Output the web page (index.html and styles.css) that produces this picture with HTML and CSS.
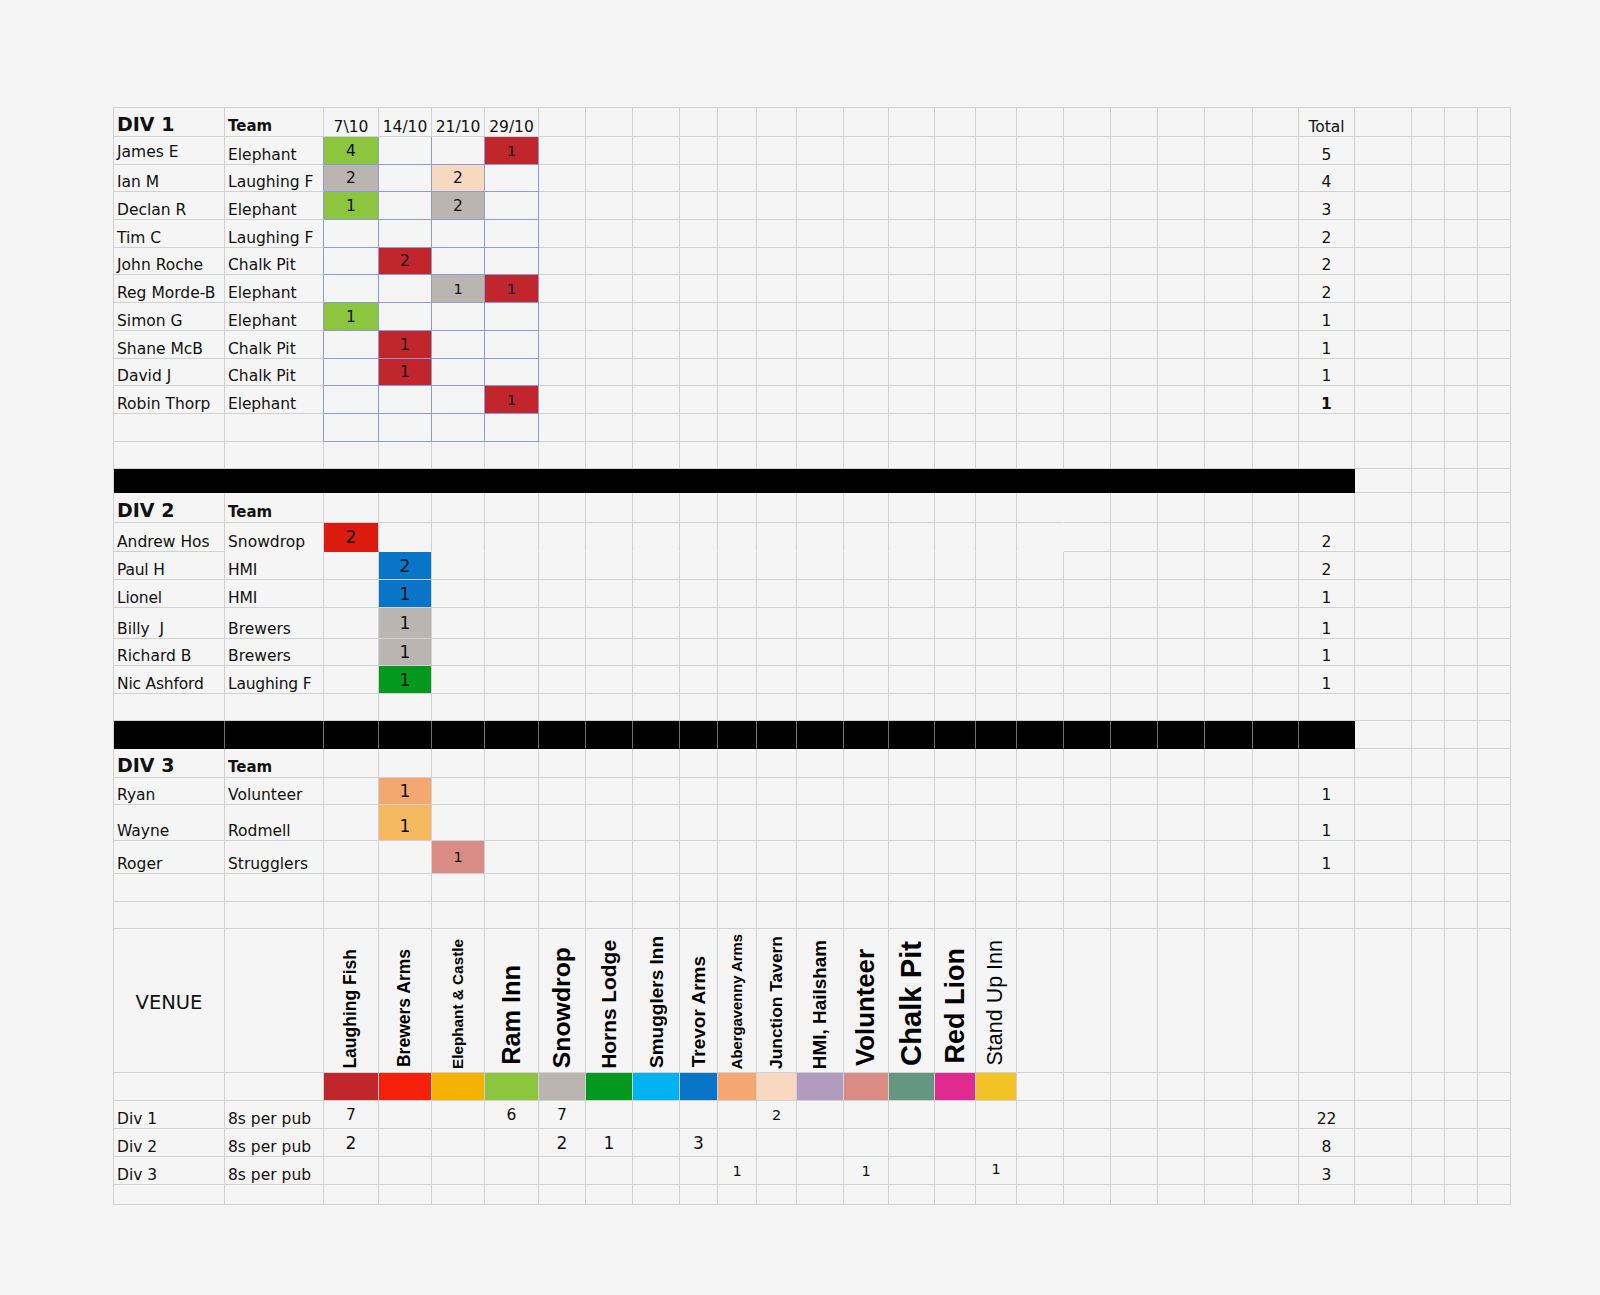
FILE: index.html
```html
<!DOCTYPE html>
<html lang="en">
<head>
<meta charset="utf-8">
<title>Darts league</title>
<link rel="stylesheet" href="styles.css">
</head>
<body>
<div class="sheet">
  <!-- DIV 1 header -->
  <div class="row">
    <div class="h1">DIV 1</div><div class="h2">Team</div>
    <div class="ctr">7\10</div><div class="ctr">14/10</div><div class="ctr">21/10</div><div class="ctr">29/10</div>
    <div></div><div></div><div></div><div></div><div></div><div></div><div></div><div></div><div></div><div></div><div></div><div></div><div></div><div></div><div></div><div></div><div></div>
    <div class="ctr">Total</div>
    <div></div><div></div><div></div><div></div>
  </div>
  <div class="row">
    <div class="nm hi">James E</div><div class="bl">Elephant</div>
    <div class="b n lgreen">4</div><div class="b"></div><div class="b"></div><div class="b n dred sm">1</div>
    <div></div><div></div><div></div><div></div><div></div><div></div><div></div><div></div><div></div><div></div><div></div><div></div><div></div><div></div><div></div><div></div><div></div>
    <div class="ctr">5</div>
    <div></div><div></div><div></div><div></div>
  </div>
  <div class="row">
    <div class="nm">Ian M</div><div class="bl">Laughing F</div>
    <div class="b n grey">2</div><div class="b"></div><div class="b n peach">2</div><div class="b"></div>
    <div></div><div></div><div></div><div></div><div></div><div></div><div></div><div></div><div></div><div></div><div></div><div></div><div></div><div></div><div></div><div></div><div></div>
    <div class="ctr">4</div>
    <div></div><div></div><div></div><div></div>
  </div>
  <div class="row">
    <div class="nm">Declan R</div><div class="bl">Elephant</div>
    <div class="b n lgreen">1</div><div class="b"></div><div class="b n grey">2</div><div class="b"></div>
    <div></div><div></div><div></div><div></div><div></div><div></div><div></div><div></div><div></div><div></div><div></div><div></div><div></div><div></div><div></div><div></div><div></div>
    <div class="ctr">3</div>
    <div></div><div></div><div></div><div></div>
  </div>
  <div class="row">
    <div class="nm">Tim C</div><div class="bl">Laughing F</div>
    <div class="b"></div><div class="b"></div><div class="b"></div><div class="b"></div>
    <div></div><div></div><div></div><div></div><div></div><div></div><div></div><div></div><div></div><div></div><div></div><div></div><div></div><div></div><div></div><div></div><div></div>
    <div class="ctr">2</div>
    <div></div><div></div><div></div><div></div>
  </div>
  <div class="row">
    <div class="nm">John Roche</div><div class="bl">Chalk Pit</div>
    <div class="b"></div><div class="b n dred">2</div><div class="b"></div><div class="b"></div>
    <div></div><div></div><div></div><div></div><div></div><div></div><div></div><div></div><div></div><div></div><div></div><div></div><div></div><div></div><div></div><div></div><div></div>
    <div class="ctr">2</div>
    <div></div><div></div><div></div><div></div>
  </div>
  <div class="row">
    <div class="nm">Reg Morde-B</div><div class="bl">Elephant</div>
    <div class="b"></div><div class="b"></div><div class="b n grey sm">1</div><div class="b n dred sm">1</div>
    <div></div><div></div><div></div><div></div><div></div><div></div><div></div><div></div><div></div><div></div><div></div><div></div><div></div><div></div><div></div><div></div><div></div>
    <div class="ctr">2</div>
    <div></div><div></div><div></div><div></div>
  </div>
  <div class="row">
    <div class="nm">Simon G</div><div class="bl">Elephant</div>
    <div class="b n lgreen">1</div><div class="b"></div><div class="b"></div><div class="b"></div>
    <div></div><div></div><div></div><div></div><div></div><div></div><div></div><div></div><div></div><div></div><div></div><div></div><div></div><div></div><div></div><div></div><div></div>
    <div class="ctr">1</div>
    <div></div><div></div><div></div><div></div>
  </div>
  <div class="row">
    <div class="nm">Shane McB</div><div class="bl">Chalk Pit</div>
    <div class="b"></div><div class="b n dred">1</div><div class="b"></div><div class="b"></div>
    <div></div><div></div><div></div><div></div><div></div><div></div><div></div><div></div><div></div><div></div><div></div><div></div><div></div><div></div><div></div><div></div><div></div>
    <div class="ctr">1</div>
    <div></div><div></div><div></div><div></div>
  </div>
  <div class="row">
    <div class="nm">David J</div><div class="bl">Chalk Pit</div>
    <div class="b"></div><div class="b n dred">1</div><div class="b"></div><div class="b"></div>
    <div></div><div></div><div></div><div></div><div></div><div></div><div></div><div></div><div></div><div></div><div></div><div></div><div></div><div></div><div></div><div></div><div></div>
    <div class="ctr">1</div>
    <div></div><div></div><div></div><div></div>
  </div>
  <div class="row">
    <div class="nm">Robin Thorp</div><div class="bl thin">Elephant</div>
    <div class="b"></div><div class="b"></div><div class="b"></div><div class="b n dred sm">1</div>
    <div></div><div></div><div></div><div></div><div></div><div></div><div></div><div></div><div></div><div></div><div></div><div></div><div></div><div></div><div></div><div></div><div></div>
    <div class="ctr strong">1</div>
    <div></div><div></div><div></div><div></div>
  </div>
  <div class="row">
    <div></div><div class="bl"></div>
    <div class="b"></div><div class="b"></div><div class="b"></div><div class="b"></div>
    <div></div><div></div><div></div><div></div><div></div><div></div><div></div><div></div><div></div><div></div><div></div><div></div><div></div><div></div><div></div><div></div><div></div>
    <div></div>
    <div></div><div></div><div></div><div></div>
  </div>
  <div class="row">
    <div></div><div></div><div></div><div></div><div></div><div></div><div></div><div></div><div></div><div></div><div></div><div></div><div></div><div></div><div></div><div></div><div></div><div></div><div></div><div></div><div></div><div></div><div></div><div></div><div></div><div></div><div></div><div></div>
  </div>
  <!-- divider 1 -->
  <div class="row">
    <div class="bar"></div>
    <div></div><div></div><div></div><div></div>
  </div>
  <!-- DIV 2 -->
  <div class="row">
    <div class="h1">DIV 2</div><div class="h2">Team</div>
    <div></div><div></div><div></div><div></div><div></div><div></div><div></div><div></div><div></div><div></div><div></div><div></div><div></div><div></div><div></div>
    <div class="nr"></div>
    <div></div><div></div><div></div><div></div><div></div><div></div><div></div><div></div><div></div><div></div>
  </div>
  <div class="row">
    <div class="nm">Andrew Hos</div><div class="nb">Snowdrop</div>
    <div class="nb n red big">2</div>
    <div class="nb"></div><div class="nb"></div><div class="nb"></div><div class="nb"></div><div class="nb"></div><div class="nb"></div><div class="nb"></div><div class="nb"></div><div class="nb"></div><div class="nb"></div><div class="nb"></div><div class="nb"></div><div class="nb"></div><div class="nb"></div>
    <div class="nb nr"></div>
    <div></div><div></div><div></div><div></div><div></div>
    <div class="ctr">2</div>
    <div></div><div></div><div></div><div></div>
  </div>
  <div class="row">
    <div class="nm lucida">Paul H</div><div class="lucida">HMI</div>
    <div></div><div class="n blue big">2</div>
    <div></div><div></div><div></div><div></div><div></div><div></div><div></div><div></div><div></div><div></div><div></div><div></div><div></div><div></div><div></div><div></div><div></div><div></div><div></div>
    <div class="ctr">2</div>
    <div></div><div></div><div></div><div></div>
  </div>
  <div class="row">
    <div class="nm lucida">Lionel</div><div class="lucida">HMI</div>
    <div></div><div class="n blue big">1</div>
    <div></div><div></div><div></div><div></div><div></div><div></div><div></div><div></div><div></div><div></div><div></div><div></div><div></div><div></div><div></div><div></div><div></div><div></div><div></div>
    <div class="ctr">1</div>
    <div></div><div></div><div></div><div></div>
  </div>
  <div class="row">
    <div class="nm">Billy&nbsp; J</div><div>Brewers</div>
    <div></div><div class="n grey big">1</div>
    <div></div><div></div><div></div><div></div><div></div><div></div><div></div><div></div><div></div><div></div><div></div><div></div><div></div><div></div><div></div><div></div><div></div><div></div><div></div>
    <div class="ctr">1</div>
    <div></div><div></div><div></div><div></div>
  </div>
  <div class="row">
    <div class="nm">Richard B</div><div>Brewers</div>
    <div></div><div class="n grey big">1</div>
    <div></div><div></div><div></div><div></div><div></div><div></div><div></div><div></div><div></div><div></div><div></div><div></div><div></div><div></div><div></div><div></div><div></div><div></div><div></div>
    <div class="ctr">1</div>
    <div></div><div></div><div></div><div></div>
  </div>
  <div class="row">
    <div class="nm lucida">Nic Ashford</div><div class="lucida">Laughing F</div>
    <div></div><div class="n dgreen big">1</div>
    <div></div><div></div><div></div><div></div><div></div><div></div><div></div><div></div><div></div><div></div><div></div><div></div><div></div><div></div><div></div><div></div><div></div><div></div><div></div>
    <div class="ctr">1</div>
    <div></div><div></div><div></div><div></div>
  </div>
  <div class="row">
    <div></div><div></div><div></div><div></div><div></div><div></div><div></div><div></div><div></div><div></div><div></div><div></div><div></div><div></div><div></div><div></div><div></div><div></div><div></div><div></div><div></div><div></div><div></div><div></div><div></div><div></div><div></div><div></div>
  </div>
  <!-- divider 2 -->
  <div class="row">
    <div class="blk"></div><div class="blk"></div><div class="blk"></div><div class="blk"></div><div class="blk"></div><div class="blk"></div><div class="blk"></div><div class="blk"></div><div class="blk"></div><div class="blk"></div><div class="blk"></div><div class="blk"></div><div class="blk"></div><div class="blk"></div><div class="blk"></div><div class="blk"></div><div class="blk"></div><div class="blk"></div><div class="blk"></div><div class="blk"></div><div class="blk"></div><div class="blk"></div><div class="blk"></div><div class="blk last"></div>
    <div></div><div></div><div></div><div></div>
  </div>
  <!-- DIV 3 -->
  <div class="row">
    <div class="h1">DIV 3</div><div class="h2">Team</div>
    <div></div><div></div><div></div><div></div><div></div><div></div><div></div><div></div><div></div><div></div><div></div><div></div><div></div><div></div><div></div><div></div><div></div><div></div><div></div><div></div><div></div><div></div><div></div><div></div><div></div><div></div>
  </div>
  <div class="row">
    <div class="nm">Ryan</div><div>Volunteer</div>
    <div></div><div class="n lorange big">1</div>
    <div></div><div></div><div></div><div></div><div></div><div></div><div></div><div></div><div></div><div></div><div></div><div></div><div></div><div></div><div></div><div></div><div></div><div></div><div></div>
    <div class="ctr">1</div>
    <div></div><div></div><div></div><div></div>
  </div>
  <div class="row">
    <div class="nm">Wayne</div><div>Rodmell</div>
    <div></div><div class="n yorange big low">1</div>
    <div></div><div></div><div></div><div></div><div></div><div></div><div></div><div></div><div></div><div></div><div></div><div></div><div></div><div></div><div></div><div></div><div></div><div></div><div></div>
    <div class="ctr">1</div>
    <div></div><div></div><div></div><div></div>
  </div>
  <div class="row">
    <div class="nm">Roger</div><div>Strugglers</div>
    <div></div><div></div><div class="n salmon sm">1</div>
    <div></div><div></div><div></div><div></div><div></div><div></div><div></div><div></div><div></div><div></div><div></div><div></div><div></div><div></div><div></div><div></div><div></div><div></div>
    <div class="ctr">1</div>
    <div></div><div></div><div></div><div></div>
  </div>
  <div class="row">
    <div></div><div></div><div></div><div></div><div></div><div></div><div></div><div></div><div></div><div></div><div></div><div></div><div></div><div></div><div></div><div></div><div></div><div></div><div></div><div></div><div></div><div></div><div></div><div></div><div></div><div></div><div></div><div></div>
  </div>
  <div class="row">
    <div></div><div></div><div></div><div></div><div></div><div></div><div></div><div></div><div></div><div></div><div></div><div></div><div></div><div></div><div></div><div></div><div></div><div></div><div></div><div></div><div></div><div></div><div></div><div></div><div></div><div></div><div></div><div></div>
  </div>
  <!-- venues -->
  <div class="row">
    <div class="venue-label">VENUE</div><div></div>
    <div class="vn"><span class="v-lf">Laughing Fish</span></div>
    <div class="vn"><span class="v-ba">Brewers Arms</span></div>
    <div class="vn"><span class="v-ec">Elephant &amp; Castle</span></div>
    <div class="vn"><span class="v-ri">Ram Inn</span></div>
    <div class="vn"><span class="v-sd">Snowdrop</span></div>
    <div class="vn"><span class="v-hl">Horns Lodge</span></div>
    <div class="vn"><span class="v-si">Smugglers Inn</span></div>
    <div class="vn"><span class="v-ta">Trevor Arms</span></div>
    <div class="vn"><span class="v-aa">Abergavenny Arms</span></div>
    <div class="vn"><span class="v-jt">Junction Tavern</span></div>
    <div class="vn"><span class="v-hm">HMI, Hailsham</span></div>
    <div class="vn"><span class="v-vo">Volunteer</span></div>
    <div class="vn"><span class="v-cp">Chalk Pit</span></div>
    <div class="vn"><span class="v-rl">Red Lion</span></div>
    <div class="vn"><span class="v-su">Stand Up Inn</span></div>
    <div></div><div></div><div></div><div></div><div></div><div></div><div></div><div></div><div></div><div></div><div></div>
  </div>
  <div class="row">
    <div></div><div></div>
    <div class="dred"></div><div class="red"></div><div class="orange"></div><div class="lgreen"></div><div class="grey"></div><div class="dgreen"></div><div class="cyan"></div><div class="blue"></div><div class="lorange"></div><div class="peach"></div><div class="lav"></div><div class="salmon"></div><div class="teal"></div><div class="mag"></div><div class="yellow"></div>
    <div></div><div></div><div></div><div></div><div></div><div></div><div></div><div></div><div></div><div></div><div></div>
  </div>
  <!-- per pub -->
  <div class="row">
    <div class="nm">Div 1</div><div>8s per pub</div>
    <div class="n">7</div><div></div><div></div><div class="n">6</div><div class="n">7</div><div></div><div></div><div></div><div></div><div class="n sm">2</div>
    <div></div><div></div><div></div><div></div><div></div><div></div><div></div><div></div><div></div><div></div><div></div>
    <div class="ctr">22</div>
    <div></div><div></div><div></div><div></div>
  </div>
  <div class="row">
    <div class="nm">Div 2</div><div>8s per pub</div>
    <div class="n big">2</div><div></div><div></div><div></div><div class="n big">2</div><div class="n big">1</div><div></div><div class="n big">3</div><div></div><div></div>
    <div></div><div></div><div></div><div></div><div></div><div></div><div></div><div></div><div></div><div></div><div></div>
    <div class="ctr">8</div>
    <div></div><div></div><div></div><div></div>
  </div>
  <div class="row">
    <div class="nm">Div 3</div><div>8s per pub</div>
    <div></div><div></div><div></div><div></div><div></div><div></div><div></div><div></div><div class="n sm">1</div><div></div>
    <div></div><div class="n sm">1</div><div></div><div></div><div class="n sm hi2">1</div><div></div><div></div><div></div><div></div><div></div><div></div>
    <div class="ctr">3</div>
    <div></div><div></div><div></div><div></div>
  </div>
  <div class="row">
    <div></div><div></div><div></div><div></div><div></div><div></div><div></div><div></div><div></div><div></div><div></div><div></div><div></div><div></div><div></div><div></div><div></div><div></div><div></div><div></div><div></div><div></div><div></div><div></div><div></div><div></div><div></div><div></div>
  </div>
</div>
</body>
</html>
```
FILE: styles.css
```css
:root {
  --bg: #f6f5f5;
  --line: #d2d1d1;
  --blueline: #8e9ad2;
}

html, body {
  margin: 0;
  padding: 0;
  background: var(--bg);
}

body {
  font-family: "DejaVu Sans", "Liberation Sans", sans-serif;
  font-size: 15.5px;
  color: #111;
}

.sheet {
  display: grid;
  grid-template-columns:
    111px 99px 55px 53px 53px 54px 47px 47px 47px 38px 39px 40px 47px 45px
    46px 41px 41px 47px 47px 47px 47px 48px 46px 56px 57px 33px 33px 33px;
  grid-template-rows:
    29px 28px 27px 28px 28px 27px 28px 28px 28px 27px 28px 28px 27px
    24px 30px 29px 28px 28px 31px 27px 28px 27px
    28px 29px 27px 36px 33px 28px 27px
    144px 28px 28px 28px 28px 20px;
  width: max-content;
  margin: 107px 0 0 113px;
  border-top: 1px solid var(--line);
  border-left: 1px solid var(--line);
}

.row {
  display: contents;
}

.row > div {
  box-sizing: border-box;
  display: flex;
  align-items: flex-end;
  padding: 0 3px;
  line-height: 18px;
  white-space: nowrap;
  border-right: 1px solid var(--line);
  border-bottom: 1px solid var(--line);
}

.row > .h1 {
  font-weight: bold;
  font-size: 19px;
  line-height: 22px;
  padding-bottom: 1px;
}

.row > .h2 {
  font-weight: bold;
  font-size: 15px;
  padding-bottom: 1px;
}

.row > .nm.hi {
  padding-bottom: 3px;
}

.row > .ctr {
  justify-content: center;
  padding: 0;
}

.row > .strong {
  font-weight: bold;
}

.row > .n {
  justify-content: center;
  align-items: center;
  padding: 0;
  font-size: 15.5px;
}

.row > .n.sm {
  font-size: 14.5px;
}

.row > .n.big {
  font-size: 17px;
}

.row > .n.low {
  padding-top: 6px;
}

.row > .n.hi2 {
  padding-bottom: 4px;
}

.lucida {
  font-family: "DejaVu Sans", sans-serif;
  letter-spacing: -0.2px;
}

.thin {
  letter-spacing: -0.1px;
}

/* blue framed block in DIV 1 */
.row > .b {
  border-right-color: var(--blueline);
  border-bottom-color: var(--blueline);
}

.row > .bl {
  border-right-color: var(--blueline);
}

/* merged-looking cells */
.row > .nb {
  border-bottom-color: transparent;
}

.row > .nr {
  border-right-color: transparent;
}

/* dividers */
.row > .bar {
  grid-column: span 24;
  background: #000;
  border-right-color: #000;
  border-bottom-color: #000;
}

.row > .blk {
  background: #000;
  border-right-color: #6f6f6f;
  border-bottom-color: #000;
}

.row > .blk.last {
  border-right-color: #000;
}

/* venue headers */
.row > .venue-label {
  justify-content: center;
  align-items: center;
  font-size: 19.5px;
  padding-top: 4px;
}

.row > .vn {
  justify-content: center;
  padding: 0 0 3px;
}

.vn span {
  writing-mode: vertical-rl;
  transform: rotate(180deg);
  font-family: "Liberation Sans", Arial, sans-serif;
  font-weight: bold;
  line-height: 1;
  color: #000;
}

.v-lf { font-size: 17.5px; }
.v-ba { font-size: 17.5px; margin-bottom: 2px; }
.v-ec { font-size: 15.3px; }
.v-ri { font-size: 25.3px; margin-bottom: 4px; }
.v-sd { font-size: 24.8px; margin-bottom: 1px; }
.v-hl { font-size: 20.9px; }
.v-si { font-size: 19px; margin-bottom: 1px; }
.v-ta { font-size: 19px; margin-bottom: 2px; }
.v-aa { font-size: 14.8px; }
.v-jt { font-size: 17.4px; }
.v-hm { font-size: 18.9px; }
.v-vo { font-size: 25.8px; margin-bottom: 3px; }
.v-cp { font-size: 29.2px; margin-bottom: 3px; }
.v-rl { font-size: 27px; margin-bottom: 6px; }
.v-su { font-size: 21.5px; font-weight: normal !important; margin-bottom: 3px; }

/* fills */
.dred { background: #c0262c; }
.red { background: #f4200a; }
.row > .n.red { background: #dc1b0f; }
.orange { background: #f5b100; }
.lgreen { background: #8cc63f; }
.grey { background: #bab5b0; }
.dgreen { background: #03991f; }
.cyan { background: #00b3f0; }
.blue { background: #0875c9; }
.lorange { background: #f4a871; }
.yorange { background: #f5b962; }
.peach { background: #f9d8c2; }
.lav { background: #b19cbf; }
.salmon { background: #d98c86; }
.teal { background: #639683; }
.mag { background: #de2b8d; }
.yellow { background: #f2c326; }
```
